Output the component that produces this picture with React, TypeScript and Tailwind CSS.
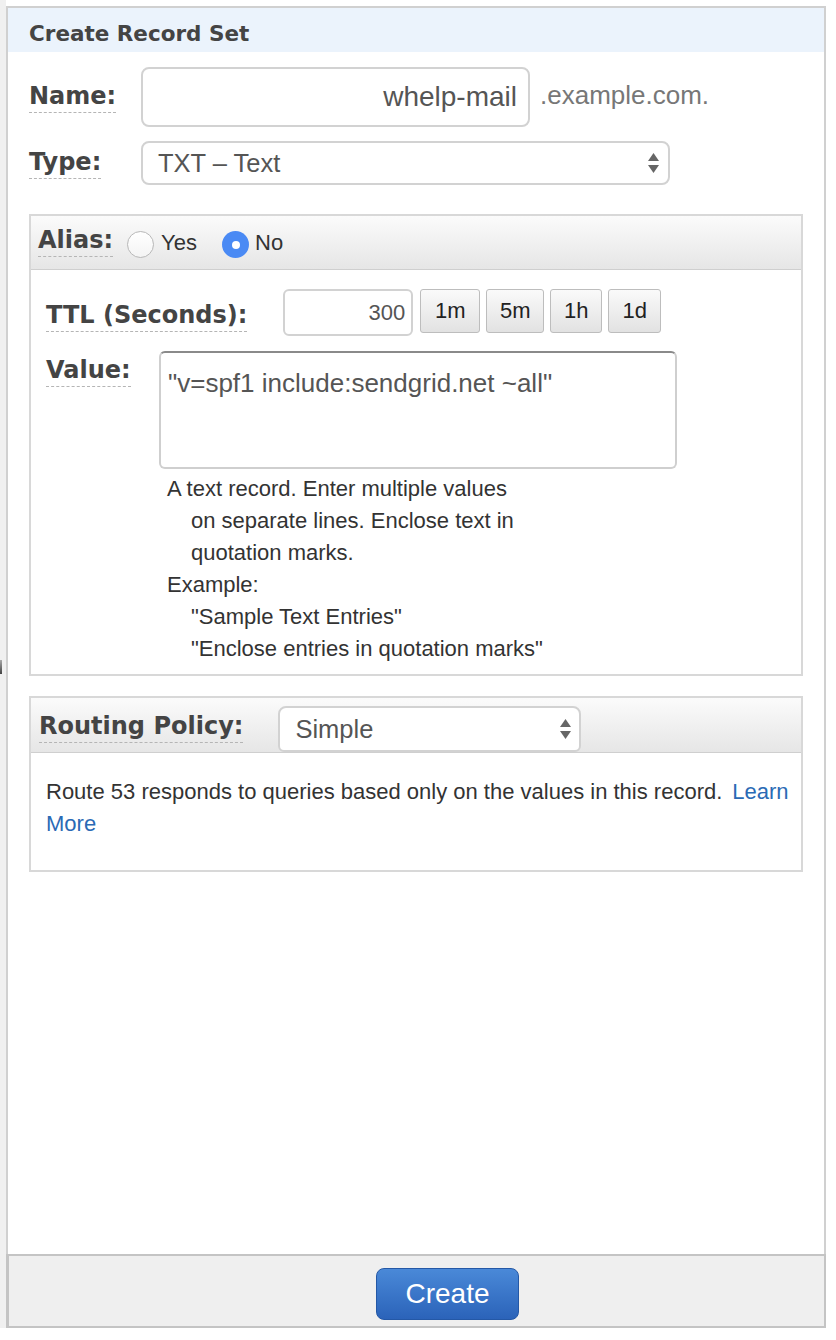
import React from "react";

const bold = { fontFamily: '"DejaVu Sans", Verdana, sans-serif' };
const sans = { fontFamily: '"Liberation Sans", Arial, Helvetica, sans-serif' };

function Label({ children, className = "" }: { children: React.ReactNode; className?: string }) {
  return (
    <span
      style={bold}
      className={`inline-block font-bold text-[#444] text-[24px] leading-[25px] pb-[3px] border-b border-dashed border-[#b5b5b5] ${className}`}
    >
      {children}
    </span>
  );
}

function Arrows() {
  return (
    <svg width="13" height="22" viewBox="0 0 13 22" className="shrink-0">
      <path d="M6.5 1 L12 9 L1 9 Z" fill="#666" />
      <path d="M1 13 L12 13 L6.5 21 Z" fill="#666" />
    </svg>
  );
}

function TtlButton({ label, w }: { label: string; w: string }) {
  return (
    <div
      className={`${w} h-[44px] flex items-center justify-center rounded-[3px] border border-[#bdbdbd] bg-gradient-to-b from-[#fafafa] to-[#e2e2e2] text-[22px] text-[#222]`}
    >
      {label}
    </div>
  );
}

export default function App() {
  return (
    <div className="w-[836px] h-[1340px] bg-white relative overflow-hidden" style={sans}>
      <div className="absolute left-0 top-[660px] w-[2px] h-[14px] bg-gradient-to-b from-[#aaa] to-[#444]" />
      <div className="flex">
        <div className="w-[6px] h-[1328px] bg-[#f0f0f0]" />
        <div className="w-[820px] mt-[6px] flex flex-col">
          <div className="h-[1248px] border-t-2 border-x-2 border-[#d0d0d0] flex flex-col">
            <div className="h-[44px] bg-[#ebf3fc] pl-[21px] flex items-center">
              <span style={bold} className="font-bold text-[21.5px] text-[#444] leading-none pt-[8px]">
                Create Record Set
              </span>
            </div>

            {/* Name */}
            <div className="flex items-center pl-[21px] mt-[15px]">
              <div className="w-[112px] pt-[2px]">
                <Label>Name:</Label>
              </div>
              <div className="w-[389px] h-[60px] rounded-[8px] border-2 border-[#d2d2d2] flex items-center justify-end pr-[11px] text-[28px] text-[#555]">
                whelp-mail
              </div>
              <span className="ml-[10px] text-[26px] text-[#777] -mt-[4px]">.example.com.</span>
            </div>

            {/* Type */}
            <div className="flex items-center pl-[21px] mt-[14px]">
              <div className="w-[112px] pt-[2px]">
                <Label>Type:</Label>
              </div>
              <div className="w-[529px] h-[44px] rounded-[8px] border-2 border-[#d2d2d2] flex items-center justify-between pl-[15px] pr-[8px] text-[25.5px] text-[#555]">
                <span>TXT – Text</span>
                <Arrows />
              </div>
            </div>

            {/* Alias box */}
            <div className="ml-[21px] w-[774px] mt-[29px] border-2 border-[#d8d8d8]">
              <div className="h-[54px] border-b border-[#cfcfcf] bg-gradient-to-b from-[#fbfbfb] to-[#e6e6e6] flex items-center pl-[7px]">
                <Label className="-mt-[1px]">Alias:</Label>
                <div className="ml-[14px] mt-[4px] w-[27px] h-[27px] rounded-full border border-[#b8b8b8] bg-gradient-to-b from-white to-[#f4f4f4]" />
                <span className="ml-[7px] text-[22px] text-[#333]">Yes</span>
                <div className="ml-[25px] mt-[4px] w-[27px] h-[27px] rounded-full bg-[#4a8af4] flex items-center justify-center">
                  <div className="w-[8px] h-[8px] rounded-full bg-white" />
                </div>
                <span className="ml-[6px] text-[22px] text-[#333]">No</span>
              </div>

              <div className="pl-[15px] pt-[19px] pb-[9px]">
                {/* TTL */}
                <div className="flex items-center">
                  <Label className="mt-[10px]">TTL (Seconds):</Label>
                  <div className="ml-[36px] w-[130px] h-[47px] rounded-[6px] border-2 border-[#d2d2d2] flex items-center justify-end pr-[6px] text-[22px] text-[#555]">
                    300
                  </div>
                  <div className="ml-[7px] flex gap-[6px] -mt-[4px]">
                    <TtlButton label="1m" w="w-[60px]" />
                    <TtlButton label="5m" w="w-[58px]" />
                    <TtlButton label="1h" w="w-[52px]" />
                    <TtlButton label="1d" w="w-[53px]" />
                  </div>
                </div>

                {/* Value */}
                <div className="flex mt-[15px]">
                  <div className="w-[113px] pt-[7px]">
                    <Label>Value:</Label>
                  </div>
                  <div>
                    <div className="w-[518px] h-[118px] rounded-[6px] border-2 border-[#cfcfcf] border-t-[#8a8a8a] pl-[7px] pt-[14px] text-[26px] leading-[32px] text-[#555]">
                      "v=spf1 include:sendgrid.net ~all"
                    </div>
                    <div className="pl-[8px] mt-[4px] text-[22px] leading-[32px] text-[#333]">
                      <div>A text record. Enter multiple values</div>
                      <div className="pl-[24px]">on separate lines. Enclose text in</div>
                      <div className="pl-[24px]">quotation marks.</div>
                      <div>Example:</div>
                      <div className="pl-[24px]">"Sample Text Entries"</div>
                      <div className="pl-[24px]">"Enclose entries in quotation marks"</div>
                    </div>
                  </div>
                </div>
              </div>
            </div>

            {/* Routing policy */}
            <div className="ml-[21px] w-[774px] mt-[20px] border-2 border-[#d8d8d8]">
              <div className="h-[55px] border-b border-[#cfcfcf] bg-gradient-to-b from-[#fbfbfb] to-[#e6e6e6] flex items-end pl-[8px]">
                <div className="self-center">
                  <Label className="mt-[6px]">Routing Policy:</Label>
                </div>
                <div className="ml-[35px] w-[303px] h-[46px] rounded-t-[8px] rounded-b-[6px] border-2 border-[#d2d2d2] bg-white flex items-center justify-between pl-[15px] pr-[7px] text-[25.5px] text-[#555]">
                  <span>Simple</span>
                  <Arrows />
                </div>
              </div>
              <div className="pl-[15px] pt-[23px] pb-[30px] text-[22px] leading-[32px] text-[#333]">
                <div className="whitespace-nowrap">
                  Route 53 responds to queries based only on the values in this record.
                  <span className="ml-[10px] text-[#2a6ab5]">Learn</span>
                </div>
                <div className="text-[#2a6ab5]">More</div>
              </div>
            </div>
          </div>

          {/* Footer */}
          <div className="h-[74px] border-2 border-[#c4c4c4] border-l-[3px] bg-[#efefef] pl-[367px] pt-[12px]">
            <div className="w-[143px] h-[52px] rounded-[8px] border border-[#2458a6] bg-gradient-to-b from-[#4a89d8] to-[#2b63b9] flex items-center justify-center text-white text-[28px]">
              Create
            </div>
          </div>
        </div>
      </div>
    </div>
  );
}
